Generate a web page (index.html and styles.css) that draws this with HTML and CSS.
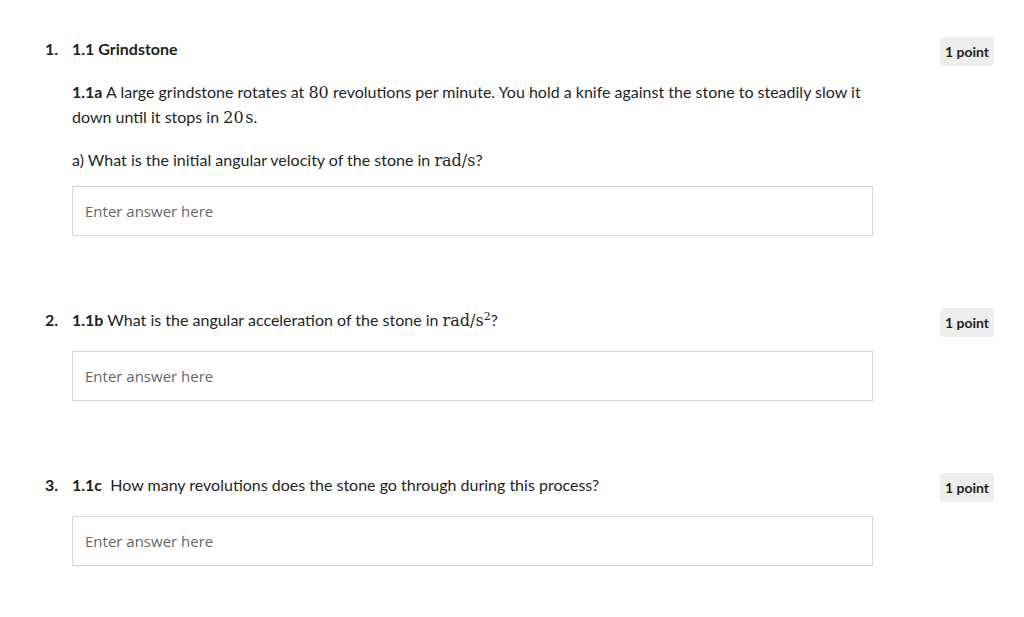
FILE: index.html
```html
<!DOCTYPE html>
<html lang="en">
<head>
<meta charset="utf-8">
<title>Grindstone</title>
<link rel="stylesheet" href="styles.css">
</head>
<body>
<ol class="questions">
  <li class="question">
    <span class="num">1.</span>
    <div class="content">
      <p class="title"><strong>1.1 Grindstone</strong></p>
      <p><strong>1.1a</strong> A large grindstone rotates at <span class="m">80</span> revolutions per minute. You hold a knife against the stone to steadily slow it down until it stops in <span class="m">20&#8202;s</span>.</p>
      <p class="prompt tight">a) What is the initial angular velocity of the stone in <span class="m">rad/s</span>?</p>
      <input class="answer" type="text" placeholder="Enter answer here">
    </div>
    <span class="badge">1 point</span>
  </li>
  <li class="question">
    <span class="num">2.</span>
    <div class="content">
      <p class="prompt"><strong>1.1b</strong> What is the angular acceleration of the stone in <span class="m">rad/s<sup>2</sup></span>?</p>
      <input class="answer" type="text" placeholder="Enter answer here">
    </div>
    <span class="badge">1 point</span>
  </li>
  <li class="question">
    <span class="num">3.</span>
    <div class="content">
      <p class="prompt"><strong>1.1c</strong>&nbsp;&nbsp;How many revolutions does the stone go through during this process?</p>
      <input class="answer" type="text" placeholder="Enter answer here">
    </div>
    <span class="badge">1 point</span>
  </li>
</ol>
</body>
</html>
```
FILE: styles.css
```css
html, body {
  margin: 0;
  padding: 0;
  background: #ffffff;
}
body {
  font-family: Lato, "Noto Sans", sans-serif;
  font-size: 16px;
  line-height: 25px;
  color: #1f1f1f;
}
.questions {
  list-style: none;
  margin: 0;
  padding: 36px 30px 0 45px;
  display: flex;
  flex-direction: column;
  gap: 71px;
}
.question {
  display: grid;
  grid-template-columns: 27px 801px 1fr auto;
  align-items: start;
}
.num {
  font-weight: 700;
}
.content {
  grid-column: 2;
  display: flex;
  flex-direction: column;
}
.content p {
  margin: 0 0 18px 0;
  padding-right: 10px;
}
.content p.prompt {
  margin-bottom: 19px;
}
.content p.tight {
  margin-bottom: 14px;
}
strong {
  font-weight: 700;
}
.m {
  font-family: "DejaVu Serif", "Liberation Serif", serif;
  font-size: 16px;
  line-height: 1;
}
.m sup {
  font-size: 11px;
  line-height: 0;
  vertical-align: 6px;
}
.answer {
  box-sizing: border-box;
  width: 801px;
  height: 50px;
  margin: 0;
  border: 1px solid #d3d7df;
  border-radius: 0;
  padding: 0 12px;
  font-family: "Open Sans", sans-serif;
  font-size: 15px;
  color: #1f1f1f;
  background: #fff;
  outline: none;
}
.answer::placeholder {
  color: #666666;
}
.badge {
  grid-column: 4;
  margin-top: 1px;
  background: #eeeeee;
  border-radius: 4px;
  padding: 0 5px;
  height: 29px;
  line-height: 29px;
  font-size: 14px;
  font-weight: 700;
  color: #1f1f1f;
}
```
